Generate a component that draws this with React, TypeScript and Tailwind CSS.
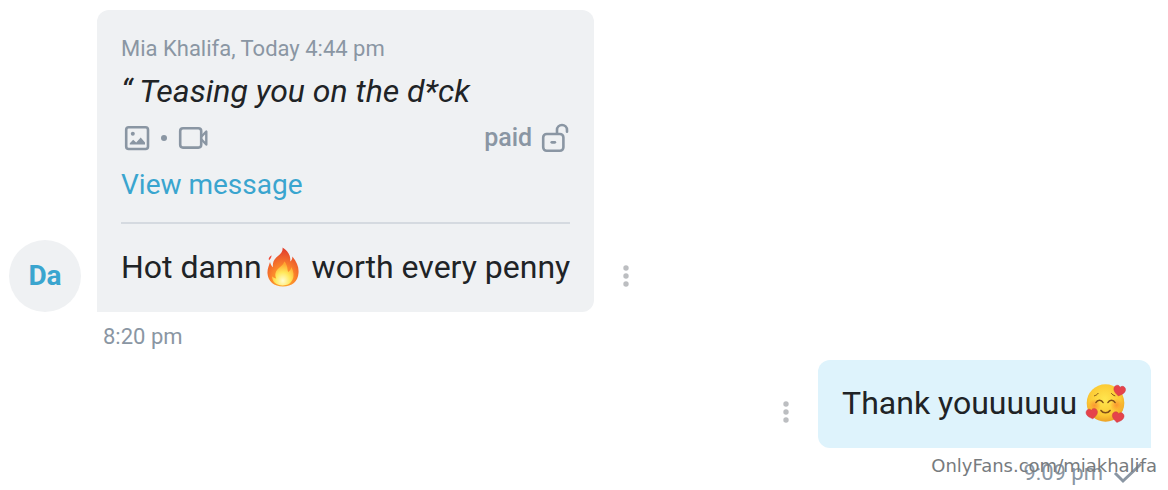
function ImageIcon() {
  return (
    <svg viewBox="0 0 28 28" className="size-7" fill="none" aria-hidden="true">
      <rect x="3.2" y="3.2" width="21.800" height="21.800" rx="2.500" stroke="currentColor" strokeWidth="2.600" />
      <circle cx="9.8" cy="9.8" r="2" fill="currentColor" />
      <path d="M6.800 20.500v-1.300l3.400-3.400 3 2.600 4.500-4.800 4.300 4.800v2.100z" fill="currentColor" />
    </svg>
  );
}

function VideoIcon() {
  return (
    <svg viewBox="0 0 32 28" className="h-7 w-8" fill="none" stroke="currentColor" strokeLinejoin="round" aria-hidden="true">
      <rect x="3.200" y="4.200" width="21" height="19.400" rx="2.800" strokeWidth="2.600" />
      <path d="M24.500 12.500L29.300 7.500V20.500L24.500 15.500" strokeWidth="2.400" />
    </svg>
  );
}

function UnlockIcon() {
  return (
    <svg viewBox="0 0 30 32" className="h-8 w-[30px]" fill="none" stroke="currentColor" strokeLinecap="round" aria-hidden="true">
      <rect x="3.2" y="12" width="20.200" height="16.800" rx="3.5" strokeWidth="2.6" />
      <path d="M17 11.500V8a5 5 0 0 1 10 0v1.800" strokeWidth="2.6" />
      <path d="M11.800 20.300h3" strokeWidth="2.8" />
    </svg>
  );
}

function FireEmoji() {
  return (
    <svg viewBox="0 0 34 40" className="mx-1 inline-block h-10 w-[34px] align-[-9px]" role="img" aria-label="fire">
      <defs>
        <radialGradient id="flame" cx="0.5" cy="0.86" r="0.8">
          <stop offset="0" stopColor="#ffb52b" />
          <stop offset="0.48" stopColor="#fb852b" />
          <stop offset="1" stopColor="#e3422d" />
        </radialGradient>
        <radialGradient id="core" cx="0.5" cy="0.8" r="0.7">
          <stop offset="0" stopColor="#fffcd0" />
          <stop offset="0.5" stopColor="#ffe85b" />
          <stop offset="1" stopColor="#ffa530" />
        </radialGradient>
      </defs>
      <path d="M16.5 .5C22 4 25 9 24.2 14.5c1.700-1.400 2.200-3 2.200-5C31 15 33 20.400 32.500 26 32 34.400 26 39.500 17 39.500S2 34.400 1.500 26.500C1.200 22 3 18.500 4 15c.7 2.600 1.400 4 2.900 5.200C6.600 15 8 12.200 12 9c3.500-2.800 5-5.200 4.500-8.500z" fill="url(#flame)" />
      <path d="M3 13.300c-.8-2 .1-3.300 2.600-5-.3 2.200-.8 3.400-2.600 5z" fill="#ef4937" />
      <path d="M18.400 14.500c3.700 4.400 2.700 8.100 3.800 10.600 1.800-1 2.800-2.700 3.200-5 2.500 4.800 2.900 9.400 1 13-2 3.800-5.400 5.400-9.800 5.400-6 0-10.700-3.500-10.500-9.200 1.300 1.400 2.500 2 4.100 2.200-1.700-3.800-.9-7.700 3-10.800 3.200-2.500 4.400-4.200 5.200-6.200z" fill="url(#core)" />
    </svg>
  );
}

const HEART = "M0 9C-3 7-6.500 5-6.500 1.500C-6.500-2.500-1.500-4 0-.5C1.500-4 6.500-2.500 6.500 1.500C6.500 5 3 7 0 9z";

function LoveEmoji() {
  return (
    <svg viewBox="0 0 42 40" className="inline-block h-10 w-[42px] align-[-9px]" role="img" aria-label="smiling face with hearts">
      <defs>
        <radialGradient id="face" cx="0.48" cy="0.4" r="0.6">
          <stop offset="0" stopColor="#ffe64e" />
          <stop offset="0.7" stopColor="#fcc934" />
          <stop offset="1" stopColor="#eda126" />
        </radialGradient>
        <radialGradient id="blush">
          <stop offset="0" stopColor="#fa792b" stopOpacity=".65" />
          <stop offset="1" stopColor="#fa792b" stopOpacity="0" />
        </radialGradient>
      </defs>
      <circle cx="20.500" cy="20" r="18.800" fill="url(#face)" />
      <circle cx="9.500" cy="22.500" r="6.500" fill="url(#blush)" />
      <circle cx="31.500" cy="22" r="6.500" fill="url(#blush)" />
      <g fill="none" stroke="#815018" strokeLinecap="round" strokeWidth="1.600">
        <path d="M11 19.500c1.500-3 5.500-3 7 0M23 19.500c1.500-3 5.500-3 7 0M16 27.500c2 3 7 3 9 0" />
        <path d="M9.500 12.800c1.400-.4 2.700-1.200 3.600-2.400M26.500 10.500c.9 1.100 2 1.900 3.400 2.300" strokeWidth="1" />
      </g>
      <g fill="#e5434b" stroke="#cb3540" strokeWidth=".5">
        <path d={HEART} transform="translate(35 5) rotate(12) scale(.9)" />
        <path d={HEART} transform="translate(6.500 28) rotate(-10) scale(.88)" />
        <path d={HEART} transform="translate(33.500 31.500) rotate(12) scale(.9)" />
      </g>
    </svg>
  );
}

function MenuButton() {
  return (
    <button type="button" aria-label="Message options" className="flex h-8 w-6 items-center justify-center text-[#bcbec1]">
      <svg viewBox="0 0 6 24" className="h-6 w-1.5" fill="currentColor" aria-hidden="true">
        <circle cx="3" cy="4" r="2.700" />
        <circle cx="3" cy="12" r="2.700" />
        <circle cx="3" cy="20" r="2.700" />
      </svg>
    </button>
  );
}

export default function App() {
  return (
    <main className="bg-white pt-2.5 pr-[17px] pl-[9px] font-[Roboto,sans-serif] text-[#202326]">
      <section className="flex items-end gap-4">
        <div className="flex size-[72px] shrink-0 items-center justify-center rounded-full bg-[#eff1f3] text-[28px] font-bold text-[#3aa5cf]">
          Da
        </div>
        <article className="rounded-xl rounded-bl-none bg-[#eff1f3] px-6 pt-6 pb-[22px]">
          <p className="text-[22px] leading-[30px] text-[#8a96a3]">Mia Khalifa, Today 4:44 pm</p>
          <p className="mt-0.5 text-[32px] leading-[50px] italic">“ Teasing you on the d*ck</p>
          <div className="flex h-11 items-center justify-between text-[#8a96a3]">
            <div className="flex items-center gap-2.5 pl-0.5">
              <ImageIcon />
              <span className="size-1.5 rounded-full bg-current" />
              <VideoIcon />
            </div>
            <div className="flex items-center gap-2 text-[25px] font-medium">
              paid
              <UnlockIcon />
            </div>
          </div>
          <a href="#message" className="block text-[28px] leading-[50px] text-[#3aa5cf]">View message</a>
          <hr className="mt-3 border-t-2 border-[#d5dae0]" />
          <p className="mt-5 text-[32px] leading-[46px]">
            Hot damn<FireEmoji /> worth every penny
          </p>
        </article>
        <div className="mb-5 ml-1">
          <MenuButton />
        </div>
      </section>
      <time className="ml-[94px] block pt-2.5 text-[22px] leading-[30px] text-[#8a96a3]">8:20 pm</time>

      <section className="mt-2 flex items-end justify-end gap-5">
        <div className="mb-5">
          <MenuButton />
        </div>
        <article className="rounded-xl rounded-br-none bg-[#def3fc] px-6 pt-5 pb-[22px]">
          <p className="text-[32px] leading-[46px]">
            Thank youuuuuu <LoveEmoji />
          </p>
        </article>
      </section>
      <footer className="relative flex items-center justify-end gap-2.5 pt-2.5 pr-2 text-[22px] leading-[30px] text-[#8a96a3]">
        <time>9:09 pm</time>
        <svg viewBox="0 0 30 24" className="h-6 w-[30px]" fill="none" stroke="currentColor" strokeWidth="3" aria-hidden="true">
          <path d="M2 12l8 8L28 3" />
        </svg>
        <span className="absolute top-1.5 -right-1.5 font-['DejaVu_Sans',sans-serif] text-[18px] leading-6 text-[#777b7e]">
          OnlyFans.com/miakhalifa
        </span>
      </footer>
    </main>
  );
}
